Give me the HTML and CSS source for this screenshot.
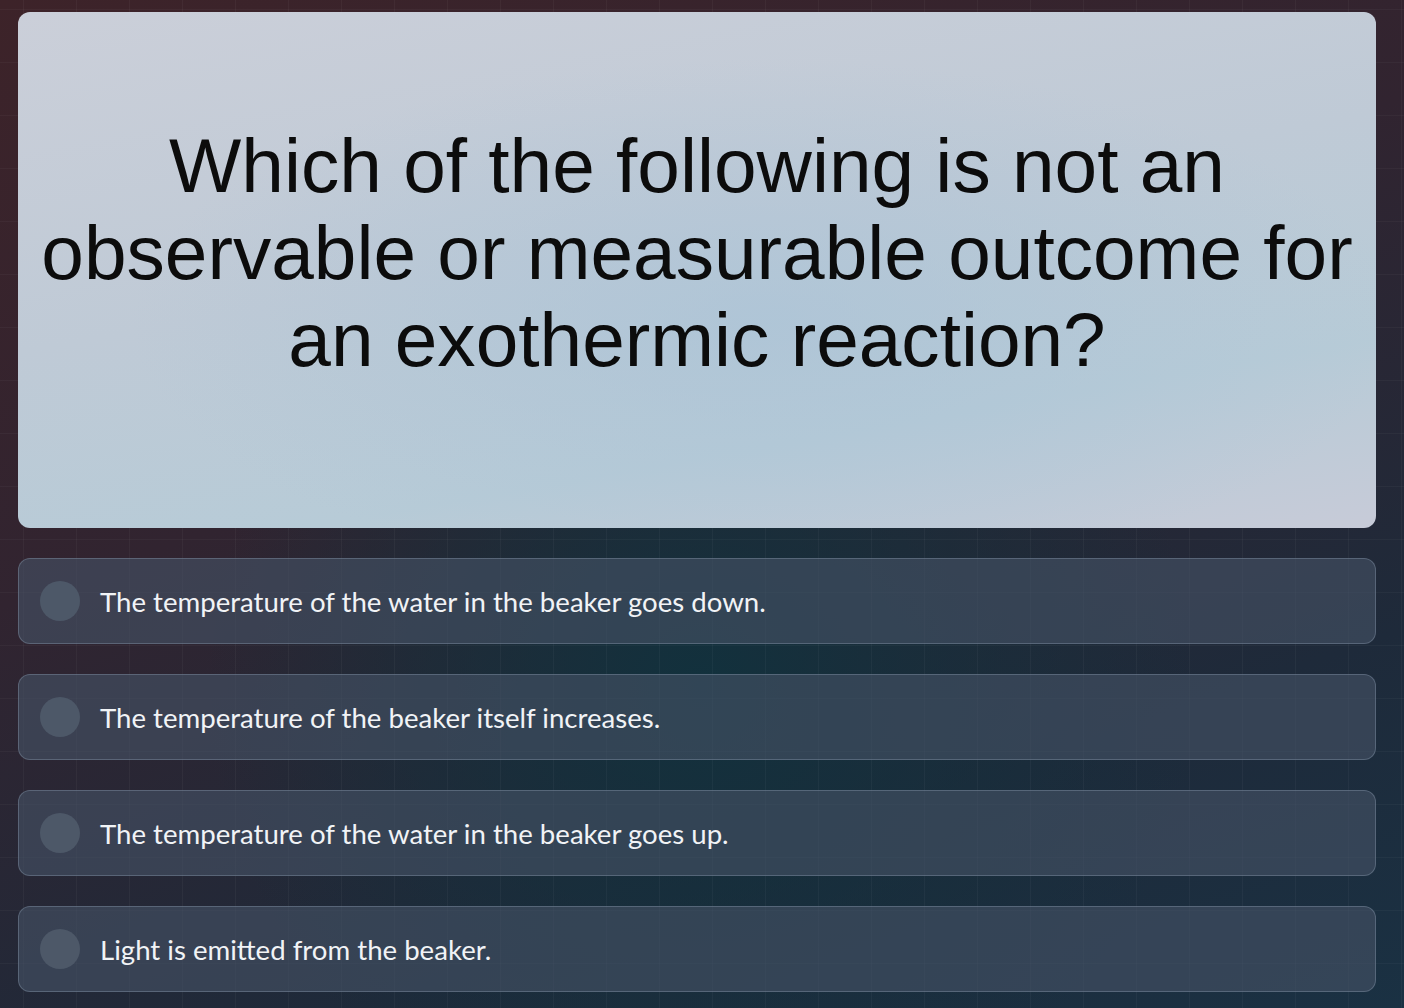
FILE: index.html
```html
<!DOCTYPE html>
<html lang="en">
<head>
  <meta charset="UTF-8">
  <title>Quiz</title>
  <link rel="stylesheet" href="styles.css">
</head>
<body>
  <div class="quiz">
    <div class="question">
      <p>Which of the following is not an observable or measurable outcome for an exothermic reaction?</p>
    </div>
    <ul class="answers">
      <li class="answer"><span class="dot"></span>The temperature of the water in the beaker goes down.</li>
      <li class="answer"><span class="dot"></span>The temperature of the beaker itself increases.</li>
      <li class="answer"><span class="dot"></span>The temperature of the water in the beaker goes up.</li>
      <li class="answer"><span class="dot"></span>Light is emitted from the beaker.</li>
    </ul>
  </div>
</body>
</html>
```

FILE: styles.css
```css
html, body { height: 100%; }
body {
  margin: 0;
  font-family: Lato, "Open Sans", sans-serif;
  background:
    linear-gradient(90deg, rgba(255,255,255,0.035) 1px, transparent 1px) 23px 0 / 53px 53px,
    linear-gradient(0deg, rgba(255,255,255,0.03) 1px, transparent 1px) 0 10px / 53px 53px,
    radial-gradient(ellipse at 50% 68%, #12313d 0%, rgba(18,49,61,0) 50%),
    linear-gradient(160deg, #3d2329 0%, #312430 40%, #1e2a3a 75%, #1a3143 100%);
  overflow: hidden;
}
.quiz { padding: 12px 28px 0 18px; }

.question {
  height: 516px;
  border-radius: 12px;
  background:
    radial-gradient(ellipse at 55% 60%, rgba(170,195,215,0.7) 0%, rgba(170,195,215,0) 60%),
    linear-gradient(170deg, #cbcfd9 0%, #bfcad6 45%, #b7cbd7 75%, #c7cbd8 100%);
  display: flex;
  align-items: center;
  justify-content: center;
  padding: 0 0 36px;
  box-sizing: border-box;
}
.question p {
  margin: 0;
  font-family: "Liberation Sans", Arial, sans-serif;
  font-size: 76.6px;
  line-height: 87px;
  color: #0c0c0c;
  text-align: center;
}

.answers { list-style: none; margin: 30px 0 0; padding: 0; }
.answer {
  display: flex;
  align-items: center;
  height: 86px;
  box-sizing: border-box;
  margin-bottom: 30px;
  padding-left: 21px;
  border: 1px solid rgba(150,165,185,0.35);
  border-radius: 12px;
  background: rgba(70,82,102,0.62);
  color: #f1f3f6;
  font-size: 27.6px;
}
.dot {
  width: 40px;
  height: 40px;
  border-radius: 50%;
  background: #4d5868;
  margin-right: 20px;
  flex: none;
}
```
